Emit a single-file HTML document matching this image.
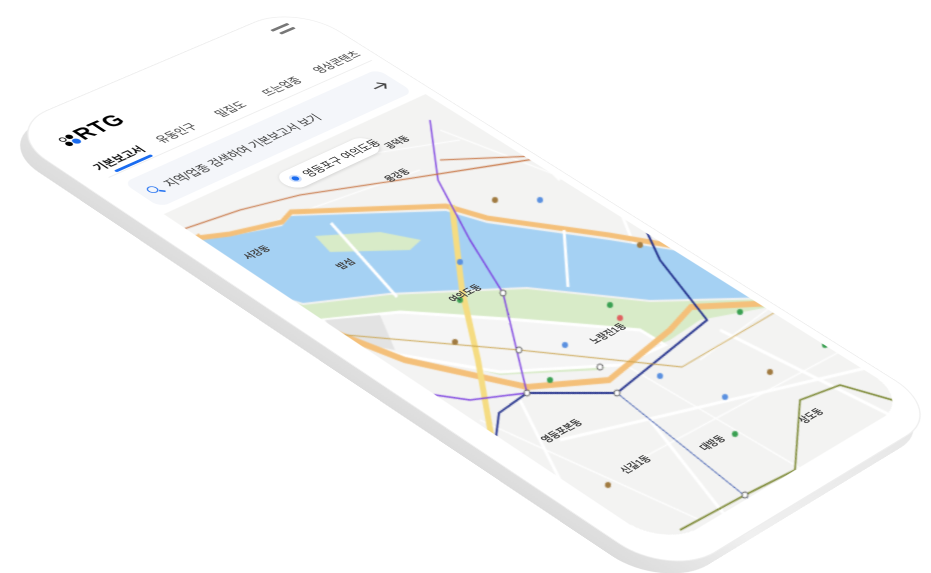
<!DOCTYPE html>
<html><head><meta charset="utf-8"><style>
html,body{margin:0;padding:0;background:#fff;width:931px;height:573px;overflow:hidden;position:relative}
*{box-sizing:border-box}
.ph{position:absolute;left:0;top:0;width:300px;height:650px;transform-origin:0 0;
transform:matrix3d(0.94277,-0.37423,0,0.00020143, 0.89705,0.58495,0,-0.00012011, 0,0,1,0, 30,125,0,1);
font-family:"Liberation Sans","Noto Sans CJK KR",sans-serif}
.thick{transform:translate(-7px,12px) matrix3d(0.94277,-0.37423,0,0.00020143, 0.89705,0.58495,0,-0.00012011, 0,0,1,0, 30,125,0,1)}
.body{position:absolute;left:-24px;top:-8px;width:334px;height:684px;border-radius:50px;background:#fff}
.thick .body{background:linear-gradient(90deg,#dcdcdc,#f0f0f0 30%,#e6e6e6)}
.ab{position:absolute;white-space:nowrap}
.tab{position:absolute;top:64px;font-size:11px;color:#333;white-space:nowrap}
.map{position:absolute;left:0;top:146px;width:300px;height:504px;overflow:hidden;border-radius:0 0 38px 38px}
.inv{position:absolute;left:0;top:-146px;width:931px;height:573px;transform-origin:0 0;
transform:matrix3d(0.67626,0.45020,0,-0.00008215, -1.01518,1.05585,0,0.00033131, 0,0,1,0, 106.611,-145.487,0,1)}
.lb{position:absolute;font-size:9px;color:#444;font-weight:bold;white-space:nowrap}
</style></head><body>
<div class="ph thick"><div class="body"></div></div>
<div class="ph">
  <div class="body" style="border:1px solid #eee"></div>
  <div class="ab" style="left:262px;top:8px;width:20px;height:2.5px;background:#777;border-radius:1px"></div>
  <div class="ab" style="left:265px;top:15px;width:17px;height:2.5px;background:#777;border-radius:1px"></div>
  <div class="ab" style="left:4px;top:26px;width:6px;height:6px;border:1px solid #000;border-radius:50%"></div>
  <div class="ab" style="left:4px;top:33px;width:6px;height:6px;background:#000;border-radius:50%"></div>
  <div class="ab" style="left:11px;top:26px;width:6px;height:6px;background:#000;border-radius:50%"></div>
  <div class="ab" style="left:11px;top:33px;width:7px;height:7px;background:#1a6cf0;border-radius:50%"></div>
  <div class="ab" style="left:20px;top:21px;font-size:21px;font-weight:900;color:#000;letter-spacing:1px">RTG</div>
  <div class="tab" style="left:0px;font-weight:bold;color:#111">기본보고서</div>
  <div class="tab" style="left:68px">유동인구</div>
  <div class="tab" style="left:134px">밀집도</div>
  <div class="tab" style="left:188px">뜨는업종</div>
  <div class="tab" style="left:248px">영상콘텐츠</div>
  <div class="ab" style="left:10px;top:82px;width:40px;height:3px;background:#1a6cf0;border-radius:2px"></div>
  <div class="ab" style="left:0;top:86px;width:300px;height:1px;background:#eee"></div>
  <div class="ab" style="left:4px;top:98px;width:290px;height:40px;border-radius:9px;background:#f4f6fa"></div>
  <div class="ab" style="left:12px;top:113px;width:9px;height:9px;border:1.8px solid #1a6cf0;border-radius:50%"></div>
  <div class="ab" style="left:19px;top:122px;width:5px;height:2px;background:#1a6cf0;transform:rotate(45deg)"></div>
  <div class="ab" style="left:30px;top:111px;font-size:11.5px;color:#333">지역/업종 검색하여 기본보고서 보기</div>
  <svg class="ab" style="left:268px;top:110px" width="18" height="14"><path d="M2 7 H15 M10 2 L15 7 L10 12" fill="none" stroke="#444" stroke-width="1.6"/></svg>
  <div class="map">
    <div class="inv">
<svg width="931" height="573" viewBox="0 0 931 573">
<rect width="931" height="573" fill="#f3f3f2"/>
<g stroke="#fff" stroke-width="3" fill="none">
<path d="M200 170 L330 120 M500 120 L560 180 M600 160 L640 260 M520 400 L600 560 M650 420 L760 560 M720 330 L900 420 M560 440 L900 360 M430 450 L560 520 M300 360 L420 470"/>
</g>
<g stroke="#fff" stroke-width="1.2" fill="none">
<path d="M480 420 L700 520 M600 350 L820 480 M700 360 L780 300 M620 470 L880 330 M440 130 L620 200 M330 160 L460 140 M250 230 L420 170"/>
</g>
<path d="M225 282 L303 305 L389 295 L527 289 L650 302 L772 299 L790 303 L700 320 L670 340 L600 370 L500 375 L400 350 L320 330 L280 310 Z" fill="#d8ebc8"/>
<path d="M323 320 L400 312 L520 320 L640 330 L665 345 L620 365 L500 372 L400 355 L330 335 Z" fill="#f5f5f5" stroke="#fff" stroke-width="3"/>
<path d="M325 320 L380 315 L395 350 L340 340 Z" fill="#e3e3e3"/>
<path d="M160 245 L230 236 L282 226 L291 216 L446 211 L487 223 L609 240 L691 253 L760 272 L800 296 L772 297 L650 300 L527 287 L389 293 L303 303 L225 280 L175 260 Z" fill="#a5d1f3"/>
<path d="M315 236 L380 232 L421 240 L410 250 L330 252 Z" fill="#d8ebc8"/>
<path d="M165 242 L230 234 L282 222 L291 212 L446 206 L487 218 L609 235 L691 249 L740 268" fill="none" stroke="#f4c07a" stroke-width="5"/>
<path d="M290 322 L315 325 L405 360 L527 387 L609 380 L670 330 L691 307 L797 302" fill="none" stroke="#f4c07a" stroke-width="6"/>
<path d="M160 260 L200 235" fill="none" stroke="#f4c07a" stroke-width="4"/>
<path d="M452 205 L462 290 L478 360 L492 440" fill="none" stroke="#f5dc82" stroke-width="6"/>
<path d="M331 223 L397 297 M564 230 L568 287" stroke="#fff" stroke-width="3"/>
<path d="M430 120 L438 180 L470 240 L503 293 L527 393 L470 400 L421 393" fill="none" stroke="#7b3fe0" stroke-width="1.5"/>
<path d="M638 213 L660 260 L707 320 L617 393 L527 393 L499 413 L495 445" fill="none" stroke="#1f2d8a" stroke-width="2"/>
<path d="M617 393 L750 500 L760 530" fill="none" stroke="#2a4aa8" stroke-width="1"/>
<path d="M323 333 L519 350 L682 367 L784 307" fill="none" stroke="#c9a24a" stroke-width="1"/>
<path d="M680 530 L745 495 L795 470 L800 400 L840 385 L910 405" fill="none" stroke="#6f7d20" stroke-width="1.6"/>
<path d="M175 232 L240 210 L300 195 L400 180 L560 155" fill="none" stroke="#c0622a" stroke-width="1.2"/>
<path d="M440 160 L560 155" fill="none" stroke="#c0622a" stroke-width="1"/>
<path d="M180 230 L190 260 L200 290" fill="none" stroke="#30a050" stroke-width="1"/>
<g fill="#fff" stroke="#555" stroke-width="1">
<circle cx="503" cy="293" r="3"/><circle cx="527" cy="393" r="3"/><circle cx="617" cy="393" r="3"/><circle cx="519" cy="350" r="3"/><circle cx="745" cy="495" r="3"/><circle cx="600" cy="367" r="3"/>
</g>
<g fill="#a07a40"><circle cx="495" cy="200" r="3"/><circle cx="455" cy="342" r="3"/><circle cx="770" cy="372" r="3"/><circle cx="608" cy="485" r="3"/><circle cx="640" cy="245" r="3"/></g>
<g fill="#3aa052"><circle cx="460" cy="300" r="3"/><circle cx="550" cy="380" r="3"/><circle cx="740" cy="312" r="3"/><circle cx="735" cy="434" r="3"/><circle cx="825" cy="345" r="3"/><circle cx="610" cy="305" r="3"/></g>
<g fill="#5a90e0"><circle cx="460" cy="262" r="3"/><circle cx="565" cy="345" r="3"/><circle cx="660" cy="376" r="3"/><circle cx="725" cy="397" r="3"/><circle cx="540" cy="200" r="3"/></g>
<circle cx="620" cy="318" r="3" fill="#e06060"/>
</svg>
    </div>
    <div class="lb" style="left:100px;top:200px">여의도동</div>
    <div class="lb" style="left:24px;top:360px">영등포본동</div>
    <div class="lb" style="left:44px;top:420px">신길1동</div>
    <div class="lb" style="left:115px;top:438px">대방동</div>
    <div class="lb" style="left:205px;top:462px">상도동</div>
    <div class="lb" style="left:150px;top:300px">노량진1동</div>
    <div class="lb" style="left:60px;top:120px">밤섬</div>
    <div class="lb" style="left:215px;top:28px">공덕동</div>
    <div class="lb" style="left:180px;top:60px">용강동</div>
    <div class="lb" style="left:10px;top:70px">서강동</div>
  </div>
  <div class="ab" style="left:108px;top:158px;width:104px;height:24px;border-radius:12px;background:#fff;box-shadow:0 1px 4px rgba(0,0,0,.15)"></div>
  <div class="ab" style="left:116px;top:165px;width:10px;height:10px;border-radius:50%;background:#1a6cf0;border:2px solid #cfe0fd"></div>
  <div class="ab" style="left:131px;top:163px;font-size:11px;color:#222">영등포구 여의도동</div>
</div>
</body></html>
